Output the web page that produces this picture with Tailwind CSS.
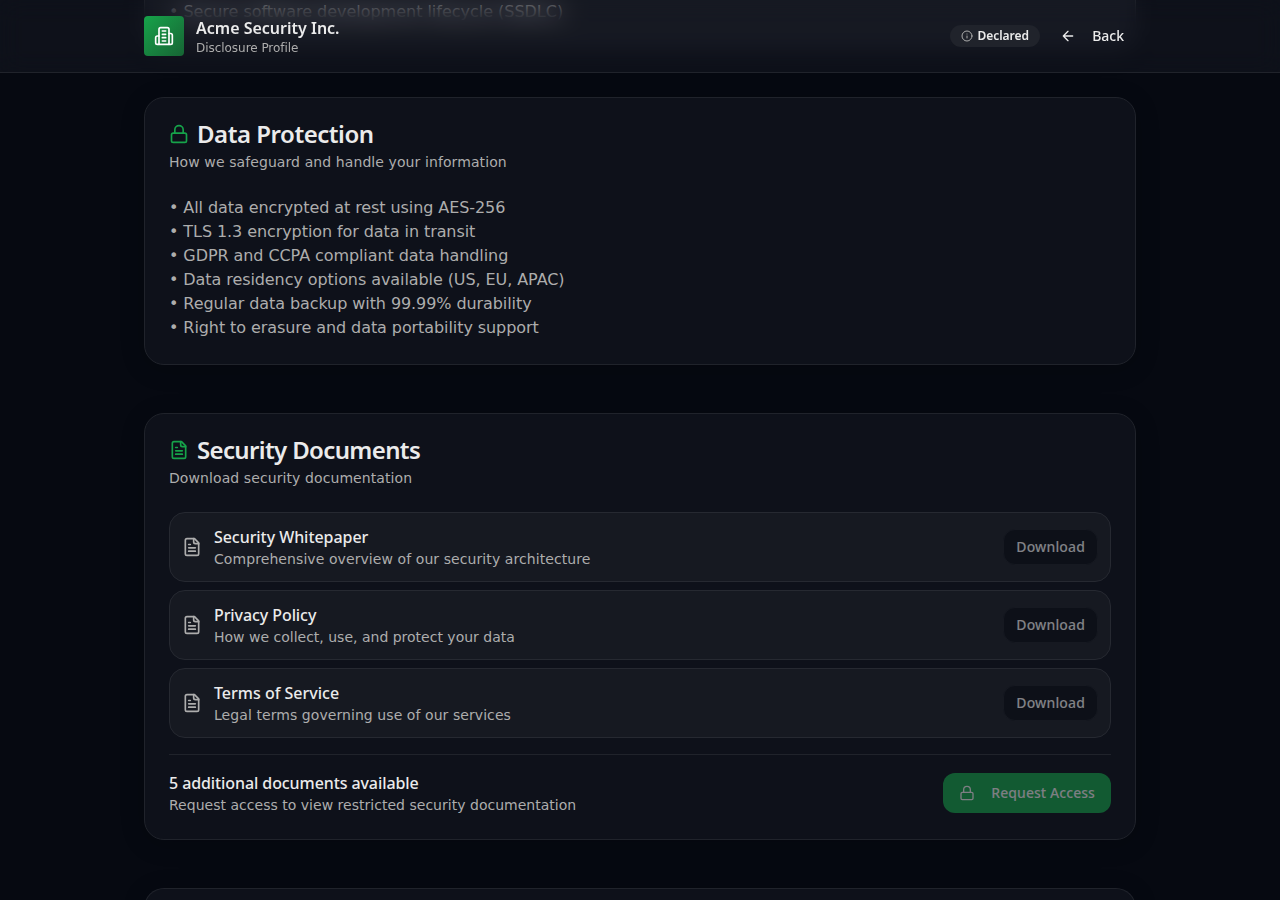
<!DOCTYPE html>
<html lang="en">

<head>
  <meta charset="UTF-8" />
  <meta name="viewport" content="width=device-width, initial-scale=1.0" />
  <title>Acme Security Inc. - Disclosure Profile</title>
  <script src="https://cdn.jsdelivr.net/npm/@tailwindcss/browser@4"></script>
</head>

<body class="h-screen overflow-hidden bg-[#060911] font-['DejaVu_Sans',sans-serif] text-[#ebebeb]">

  <!-- Header -->
  <header class="fixed inset-x-0 top-0 z-10 h-[73px] border-b border-[#20232b] bg-[#dfe3ff]/4 backdrop-blur-md">
    <div class="mx-auto flex h-[72px] w-[992px] items-center justify-between">
      <div class="flex items-center gap-3">
        <div class="flex size-10 items-center justify-center rounded bg-linear-to-br from-[#16a34a] to-[#166534]">
          <svg class="size-5 text-white" viewBox="0 0 24 24" fill="none" stroke="currentColor" stroke-width="2" stroke-linecap="round" stroke-linejoin="round">
            <path d="M6 22V4a2 2 0 0 1 2-2h8a2 2 0 0 1 2 2v18Z" />
            <path d="M6 12H4a2 2 0 0 0-2 2v6a2 2 0 0 0 2 2h2" />
            <path d="M18 9h2a2 2 0 0 1 2 2v9a2 2 0 0 1-2 2h-2" />
            <path d="M10 6h4M10 10h4M10 14h4M10 18h4" />
          </svg>
        </div>
        <div>
          <h1 class="font-['Noto_Sans',sans-serif] text-base font-semibold">Acme Security Inc.</h1>
          <p class="text-xs tracking-[-0.04px] text-[#adadad]">Disclosure Profile</p>
        </div>
      </div>
      <div class="flex items-center gap-2 font-['Noto_Sans',sans-serif]">
        <div class="flex h-[22px] items-center gap-1 rounded-full bg-[#20232b] px-[11px] text-xs font-semibold">
          <svg class="size-3 text-[#adadad]" viewBox="0 0 24 24" fill="none" stroke="currentColor" stroke-width="2" stroke-linecap="round" stroke-linejoin="round">
            <circle cx="12" cy="12" r="10" />
            <path d="M12 16v-4M12 8h.01" />
          </svg>
          Declared
        </div>
        <button class="flex h-9 items-center gap-4 px-3 text-sm font-medium">
          <svg class="size-4" viewBox="0 0 24 24" fill="none" stroke="currentColor" stroke-width="2" stroke-linecap="round" stroke-linejoin="round">
            <path d="m12 19-7-7 7-7M19 12H5" />
          </svg>
          Back
        </button>
      </div>
    </div>
  </header>

  <main class="mx-auto flex w-[992px] flex-col gap-12">
    <!-- Secure development, scrolled under the header -->
    <section class="h-[49px] shrink-0 rounded-b-[20px] border border-t-0 border-[#20232b] bg-[#0e111a] px-6 text-[#adadad] shadow-[0_4px_24px_rgba(0,0,0,0.2)]">
      <p class="leading-6 tracking-[-0.02px]">• Secure software development lifecycle (SSDLC)</p>
    </section>

    <!-- Data protection -->
    <section class="rounded-[20px] border border-[#20232b] bg-[#0e111a] p-6 shadow-[0_4px_24px_rgba(0,0,0,0.2)]">
      <h2 class="flex items-center gap-2 font-['Noto_Sans',sans-serif] text-2xl leading-6 font-semibold tracking-[-0.47px]">
        <svg class="size-5 text-[#16a34a]" viewBox="0 0 24 24" fill="none" stroke="currentColor" stroke-width="2" stroke-linecap="round" stroke-linejoin="round">
          <rect x="3" y="11" width="18" height="11" rx="2" />
          <path d="M7 11V7a5 5 0 0 1 10 0v4" />
        </svg>
        Data Protection
      </h2>
      <p class="mt-1.5 text-sm tracking-[0.09px] text-[#adadad]">How we safeguard and handle your information</p>
      <ul class="mt-6 leading-6 tracking-[-0.08px] text-[#adadad]">
        <li>• All data encrypted at rest using AES-256</li>
        <li>• TLS 1.3 encryption for data in transit</li>
        <li>• GDPR and CCPA compliant data handling</li>
        <li>• Data residency options available (US, EU, APAC)</li>
        <li>• Regular data backup with 99.99% durability</li>
        <li>• Right to erasure and data portability support</li>
      </ul>
    </section>

    <!-- Security documents -->
    <section class="rounded-[20px] border border-[#20232b] bg-[#0e111a] p-6 shadow-[0_4px_24px_rgba(0,0,0,0.2)]">
      <h2 class="flex items-center gap-2 font-['Noto_Sans',sans-serif] text-2xl leading-6 font-semibold tracking-[-0.64px]">
        <svg class="size-5 text-[#16a34a]" viewBox="0 0 24 24" fill="none" stroke="currentColor" stroke-width="2" stroke-linecap="round" stroke-linejoin="round">
          <path d="M15 2H6a2 2 0 0 0-2 2v16a2 2 0 0 0 2 2h12a2 2 0 0 0 2-2V7Z" />
          <path d="M14 2v4a2 2 0 0 0 2 2h4M10 9H8M16 13H8M16 17H8" />
        </svg>
        Security Documents
      </h2>
      <p class="mt-1.5 text-sm tracking-[0.09px] text-[#adadad]">Download security documentation</p>

      <div class="mt-6 flex flex-col gap-2">
        <div class="flex items-center gap-3 rounded-2xl border border-[#262931] bg-[#161921] p-3">
          <svg class="size-5 text-[#adadad]" viewBox="0 0 24 24" fill="none" stroke="currentColor" stroke-width="2" stroke-linecap="round" stroke-linejoin="round">
            <path d="M15 2H6a2 2 0 0 0-2 2v16a2 2 0 0 0 2 2h12a2 2 0 0 0 2-2V7Z" />
            <path d="M14 2v4a2 2 0 0 0 2 2h4M10 9H8M16 13H8M16 17H8" />
          </svg>
          <div class="flex-1">
            <p class="font-['Noto_Sans',sans-serif] font-medium tracking-[-0.06px]">Security Whitepaper</p>
            <p class="text-sm tracking-[0.08px] text-[#adadad]">Comprehensive overview of our security architecture</p>
          </div>
          <button class="h-9 rounded-xl border border-[#161921] bg-[#050811] px-3 font-['Noto_Sans',sans-serif] text-sm font-medium tracking-[0.14px] opacity-50" disabled>Download</button>
        </div>
        <div class="flex items-center gap-3 rounded-2xl border border-[#262931] bg-[#161921] p-3">
          <svg class="size-5 text-[#adadad]" viewBox="0 0 24 24" fill="none" stroke="currentColor" stroke-width="2" stroke-linecap="round" stroke-linejoin="round">
            <path d="M15 2H6a2 2 0 0 0-2 2v16a2 2 0 0 0 2 2h12a2 2 0 0 0 2-2V7Z" />
            <path d="M14 2v4a2 2 0 0 0 2 2h4M10 9H8M16 13H8M16 17H8" />
          </svg>
          <div class="flex-1">
            <p class="font-['Noto_Sans',sans-serif] font-medium tracking-[-0.08px]">Privacy Policy</p>
            <p class="text-sm text-[#adadad]">How we collect, use, and protect your data</p>
          </div>
          <button class="h-9 rounded-xl border border-[#161921] bg-[#050811] px-3 font-['Noto_Sans',sans-serif] text-sm font-medium tracking-[0.14px] opacity-50" disabled>Download</button>
        </div>
        <div class="flex items-center gap-3 rounded-2xl border border-[#262931] bg-[#161921] p-3">
          <svg class="size-5 text-[#adadad]" viewBox="0 0 24 24" fill="none" stroke="currentColor" stroke-width="2" stroke-linecap="round" stroke-linejoin="round">
            <path d="M15 2H6a2 2 0 0 0-2 2v16a2 2 0 0 0 2 2h12a2 2 0 0 0 2-2V7Z" />
            <path d="M14 2v4a2 2 0 0 0 2 2h4M10 9H8M16 13H8M16 17H8" />
          </svg>
          <div class="flex-1">
            <p class="font-['Noto_Sans',sans-serif] font-medium">Terms of Service</p>
            <p class="text-sm tracking-[0.07px] text-[#adadad]">Legal terms governing use of our services</p>
          </div>
          <button class="h-9 rounded-xl border border-[#161921] bg-[#050811] px-3 font-['Noto_Sans',sans-serif] text-sm font-medium tracking-[0.14px] opacity-50" disabled>Download</button>
        </div>
      </div>

      <div class="mt-4 flex items-center justify-between border-t border-[#20232b] pt-4">
        <div>
          <p class="font-['Noto_Sans',sans-serif] font-medium tracking-[-0.09px]">5 additional documents available</p>
          <p class="text-sm tracking-[0.02px] text-[#adadad]">Request access to view restricted security documentation</p>
        </div>
        <button class="flex h-10 items-center gap-4 rounded-xl bg-[#16a34a] px-4 font-['Noto_Sans',sans-serif] text-sm font-medium tracking-[0.07px] opacity-50" disabled>
          <svg class="size-4" viewBox="0 0 24 24" fill="none" stroke="currentColor" stroke-width="2" stroke-linecap="round" stroke-linejoin="round">
            <rect x="3" y="11" width="18" height="11" rx="2" />
            <path d="M7 11V7a5 5 0 0 1 10 0v4" />
          </svg>
          Request Access
        </button>
      </div>
    </section>

    <!-- Next section, only its top edge is in view -->
    <section class="h-6 shrink-0 rounded-t-[20px] border border-b-0 border-[#20232b] bg-[#0e111a] shadow-[0_4px_24px_rgba(0,0,0,0.2)]"></section>
  </main>
</body>

</html>
